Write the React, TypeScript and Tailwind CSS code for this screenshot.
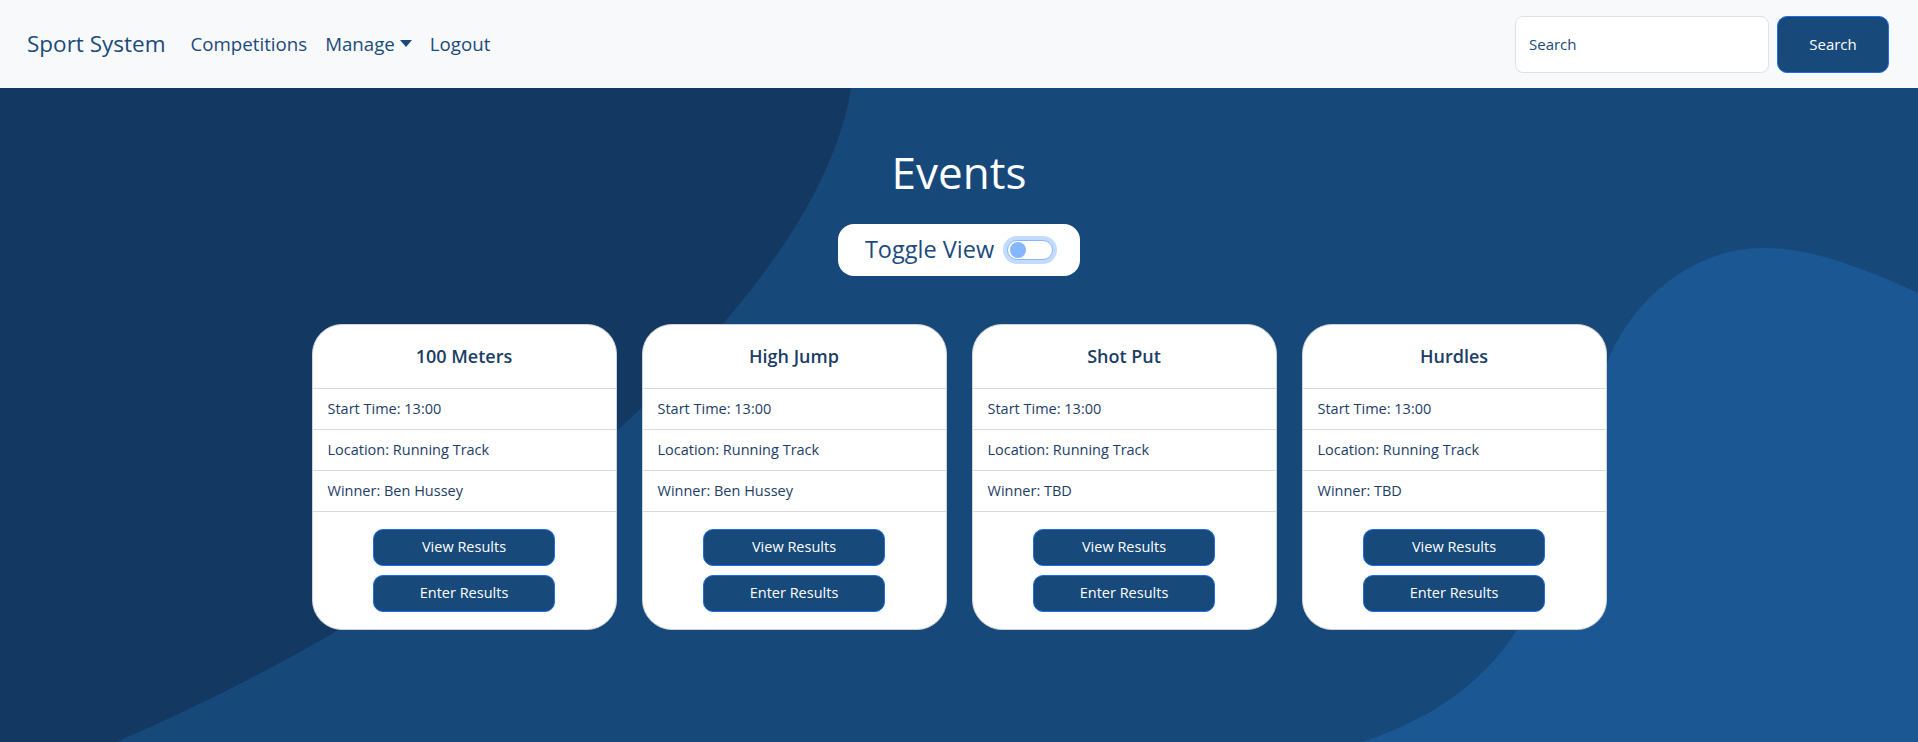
import React from "react";

type EventItem = {
  name: string;
  start: string;
  location: string;
  winner: string;
};

const EVENTS: EventItem[] = [
  { name: "100 Meters", start: "13:00", location: "Running Track", winner: "Ben Hussey" },
  { name: "High Jump", start: "13:00", location: "Running Track", winner: "Ben Hussey" },
  { name: "Shot Put", start: "13:00", location: "Running Track", winner: "TBD" },
  { name: "Hurdles", start: "13:00", location: "Running Track", winner: "TBD" },
];

function Navbar() {
  return (
    <nav className="flex h-[88px] items-center justify-between bg-[#f8f9fa] pl-[27px] pr-[29px] text-[#1b4b7c]">
      <div className="flex items-center">
        <a href="#" className="mr-[25px] text-[22.5px] leading-none">
          Sport System
        </a>
        <ul className="flex items-center gap-[18px] text-[18.7px] leading-none">
          <li>
            <a href="#">Competitions</a>
          </li>
          <li>
            <a href="#" className="flex items-center">
              Manage
              <span className="ml-[5px] inline-block h-0 w-0 border-x-[6px] border-t-[7px] border-x-transparent border-t-[#1b4b7c]" />
            </a>
          </li>
          <li>
            <a href="#">Logout</a>
          </li>
        </ul>
      </div>
      <form className="flex items-center gap-[8px]" onSubmit={(e) => e.preventDefault()}>
        <input
          type="search"
          placeholder="Search"
          className="h-[57px] w-[254px] rounded-[8px] border border-[#dee2e6] bg-white px-[13px] text-[15px] text-[#17497b] outline-none placeholder:text-[#17497b]"
        />
        <button
          type="submit"
          className="h-[57px] w-[112px] rounded-[10px] border border-[#1d6ee8] bg-[#17497b] text-[15px] text-white"
        >
          Search
        </button>
      </form>
    </nav>
  );
}

function Backdrop() {
  return (
    <svg
      className="absolute inset-0 h-full w-full"
      viewBox="0 0 1918 654"
      preserveAspectRatio="none"
      aria-hidden
    >
      <rect x="0" y="0" width="1918" height="654" fill="#164879" />
      <path d="M0 0 L851 0 C820 200 520 480 116 654 L0 654 Z" fill="#133861" />
      <path
        d="M1918 205 C1860 178 1810 160 1763 160 C1690 160 1630 215 1607 275 C1580 350 1560 470 1518 540 C1480 600 1430 630 1363 654 L1918 654 Z"
        fill="#1b5793"
      />
    </svg>
  );
}

function EventCard({ ev }: { ev: EventItem }) {
  return (
    <div className="flex w-[305px] flex-col overflow-hidden rounded-[30px] border border-[#cfd3d8] bg-white text-[#1d3d66]">
      <div className="flex h-[64px] items-center justify-center border-b border-[#d9dbde]">
        <h5 className="text-[18px] font-semibold text-[#1b3d66]">{ev.name}</h5>
      </div>
      <div className="flex h-[41px] items-center border-b border-[#d9dbde] px-[15px] text-[14.5px]">
        Start Time: {ev.start}
      </div>
      <div className="flex h-[41px] items-center border-b border-[#d9dbde] px-[15px] text-[14.5px]">
        Location: {ev.location}
      </div>
      <div className="flex h-[41px] items-center border-b border-[#d9dbde] px-[15px] text-[14.5px]">
        Winner: {ev.winner}
      </div>
      <div className="flex flex-col items-center gap-[9px] pt-[17px] pb-[17px]">
        <button className="h-[37px] w-[182px] rounded-[10px] border border-[#1d6ee8] bg-[#17497b] text-[14.5px] text-white">
          View Results
        </button>
        <button className="h-[37px] w-[182px] rounded-[10px] border border-[#1d6ee8] bg-[#17497b] text-[14.5px] text-white">
          Enter Results
        </button>
      </div>
    </div>
  );
}

export default function App() {
  return (
    <div className="min-h-screen bg-[#164879] font-['Open_Sans','Noto_Sans',sans-serif]">
      <Navbar />
      <main className="relative h-[654px] overflow-hidden">
        <Backdrop />
        <div className="relative flex flex-col items-center">
          <h1 className="mt-[58px] text-[44px] leading-[1.2] text-white">Events</h1>
          <div className="mt-[25px] flex h-[52px] items-center gap-[13px] rounded-[16px] bg-white px-[27px] text-[#1b4b7c]">
            <span className="text-[23.5px]">Toggle View</span>
            <span className="relative h-[20px] w-[46px] rounded-full border border-[#86b7fe] bg-white ring-4 ring-[#0d6efd]/25">
              <span className="absolute left-[2px] top-[1px] h-[16px] w-[16px] rounded-full bg-[#86b7fe]" />
            </span>
          </div>
          <div className="mt-[48px] flex gap-[25px]">
            {EVENTS.map((ev) => (
              <EventCard key={ev.name} ev={ev} />
            ))}
          </div>
        </div>
      </main>
    </div>
  );
}
